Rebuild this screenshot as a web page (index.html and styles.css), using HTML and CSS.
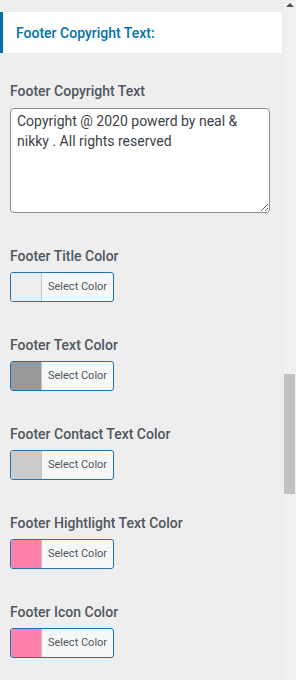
FILE: index.html
```html
<!DOCTYPE html>
<html lang="en">
<head>
    <meta charset="UTF-8">
    <meta name="viewport" content="width=device-width, initial-scale=1.0">
    <title>Footer Settings</title>
    <link rel="stylesheet" href="styles.css">
</head>
<body>
    <div class="panel">
        <div class="panel-main">
            <h3 class="section-title">Footer Copyright Text:</h3>

            <div class="control">
                <label class="control-label" for="copyText">Footer Copyright Text</label>
                <textarea id="copyText" class="control-textarea">Copyright @ 2020 powerd by neal &amp; nikky . All rights reserved</textarea>
            </div>

            <div class="control">
                <span class="control-label">Footer Title Color</span>
                <button class="color-btn"><span class="swatch swatch-empty"></span><span class="color-text">Select Color</span></button>
            </div>

            <div class="control">
                <span class="control-label">Footer Text Color</span>
                <button class="color-btn"><span class="swatch swatch-gray"></span><span class="color-text">Select Color</span></button>
            </div>

            <div class="control">
                <span class="control-label">Footer Contact Text Color</span>
                <button class="color-btn"><span class="swatch swatch-light"></span><span class="color-text">Select Color</span></button>
            </div>

            <div class="control">
                <span class="control-label">Footer Hightlight Text Color</span>
                <button class="color-btn"><span class="swatch swatch-pink"></span><span class="color-text">Select Color</span></button>
            </div>

            <div class="control">
                <span class="control-label">Footer Icon Color</span>
                <button class="color-btn"><span class="swatch swatch-pink"></span><span class="color-text">Select Color</span></button>
            </div>
        </div>

        <div class="scrollbar">
            <span class="scroll-arrow"></span>
            <span class="scroll-thumb"></span>
        </div>
    </div>
</body>
</html>
```

FILE: styles.css
```css
/* Customizer panel */
html, body {
    margin: 0;
    padding: 0;
}

body {
    font-family: Roboto, "Liberation Sans", Arial, sans-serif;
    background-color: #eeeeee;
    color: #50575e;
    width: 296px;
    height: 680px;
    overflow: hidden;
}

.panel {
    display: flex;
    height: 680px;
}

.panel-main {
    width: 282px;
    padding-top: 12px;
}

.section-title {
    margin: 0 0 28px 0;
    height: 41px;
    box-sizing: border-box;
    background: white;
    border-left: 3px solid #0073aa;
    padding-left: 13px;
    display: flex;
    align-items: center;
    color: #0073aa;
    font-size: 14px;
    font-weight: 500;
}

.control {
    display: flex;
    flex-direction: column;
    align-items: flex-start;
    padding: 0 12px 0 10px;
    margin-bottom: 33px;
}

.control-label {
    display: block;
    font-size: 14px;
    font-weight: 500;
    line-height: 20px;
    color: #50575e;
    margin-bottom: 6px;
}

.control-textarea {
    width: 260px;
    height: 105px;
    box-sizing: border-box;
    margin-top: 1px;
    padding: 2px 6px 0 6px;
    border: 1px solid #8c8f94;
    border-radius: 4px;
    background: white;
    font-family: Roboto, "Liberation Sans", Arial, sans-serif;
    font-size: 14px;
    line-height: 20px;
    color: #3c434a;
    resize: vertical;
}

.color-btn {
    display: flex;
    align-items: stretch;
    width: 104px;
    height: 30px;
    padding: 0;
    border: 1px solid #2271b1;
    border-radius: 3px;
    background: #f6f7f7;
    overflow: hidden;
    cursor: pointer;
}

.swatch {
    width: 30px;
    border-right: 1px solid #c3c4c7;
}

.swatch-empty { background: #eeeeee; }
.swatch-gray { background: #999999; }
.swatch-light { background: #cccccc; }
.swatch-pink { background: #ff80ab; }

.color-text {
    flex: 1;
    display: flex;
    align-items: center;
    padding-left: 6px;
    padding-bottom: 2px;
    font-family: Roboto, "Liberation Sans", Arial, sans-serif;
    font-size: 11px;
    color: #50575e;
}

.scrollbar {
    width: 14px;
    background: #f1f1f1;
    border-left: 1px solid #eaeaea;
    display: flex;
    flex-direction: column;
    align-items: center;
}

.scroll-arrow {
    margin-top: 3px;
    width: 0;
    height: 0;
    border-left: 4px solid transparent;
    border-right: 4px solid transparent;
    border-bottom: 4px solid #505050;
}

.scroll-thumb {
    margin-top: 367px;
    width: 11px;
    height: 120px;
    background: #c1c1c1;
}
```
